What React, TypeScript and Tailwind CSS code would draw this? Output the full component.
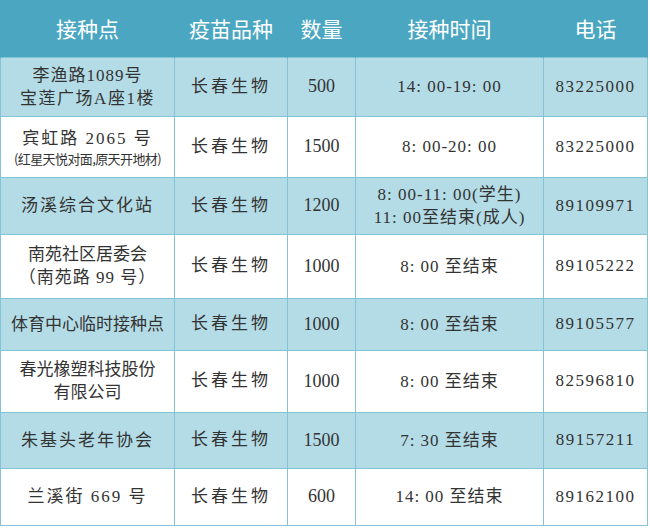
const rows: {
    place: React.ReactNode;
    qty: string;
    time: React.ReactNode;
    phone: string;
    h: string;
    light: boolean;
}[] = [
    {
        place: (
            <>
                <div className="tracking-[1px]">李渔路1089号</div>
                <div className="tracking-[1.5px]">宝莲广场A座1楼</div>
            </>
        ),
        qty: "500",
        time: "14: 00-19: 00",
        phone: "83225000",
        h: "h-[59px]",
        light: true,
    },
    {
        place: (
            <>
                <div className="tracking-[2px]">宾虹路 2065 号</div>
                <div className="text-[13px] leading-[17px] tracking-[-0.6px] font-['Noto_Sans_CJK_SC',sans-serif]">
                    (红星天悦对面,原天开地材)
                </div>
            </>
        ),
        qty: "1500",
        time: "8: 00-20: 00",
        phone: "83225000",
        h: "h-[61px]",
        light: false,
    },
    {
        place: <div className="tracking-[2px]">汤溪综合文化站</div>,
        qty: "1200",
        time: (
            <>
                <div>8: 00-11: 00(学生)</div>
                <div>11: 00至结束(成人)</div>
            </>
        ),
        phone: "89109971",
        h: "h-[57px]",
        light: true,
    },
    {
        place: (
            <>
                <div>南苑社区居委会</div>
                <div className="tracking-[1px]">（南苑路 99 号）</div>
            </>
        ),
        qty: "1000",
        time: "8: 00 至结束",
        phone: "89105222",
        h: "h-[64px]",
        light: false,
    },
    {
        place: <div>体育中心临时接种点</div>,
        qty: "1000",
        time: "8: 00 至结束",
        phone: "89105577",
        h: "h-[52px]",
        light: true,
    },
    {
        place: (
            <>
                <div>春光橡塑科技股份</div>
                <div>有限公司</div>
            </>
        ),
        qty: "1000",
        time: "8: 00 至结束",
        phone: "82596810",
        h: "h-[62px]",
        light: false,
    },
    {
        place: <div className="tracking-[2px]">朱基头老年协会</div>,
        qty: "1500",
        time: "7: 30 至结束",
        phone: "89157211",
        h: "h-[56px]",
        light: true,
    },
    {
        place: <div className="tracking-[2px]">兰溪街 669 号</div>,
        qty: "600",
        time: "14: 00 至结束",
        phone: "89162100",
        h: "h-[57px]",
        light: false,
    },
];

const headers = ["接种点", "疫苗品种", "数量", "接种时间", "电话"];
const widths = ["w-[174px]", "w-[113px]", "w-[68px]", "w-[188px]", "w-[104px]"];

export default function App() {
    return (
        <div className="w-[650px] h-[529px] bg-white overflow-hidden">
            <table className="table-fixed border-collapse w-[647px] text-[#333333] font-['Liberation_Serif','Noto_Sans_CJK_SC',serif]">
                <thead>
                    <tr className="h-[57px] bg-[#4ba7c1]">
                        {headers.map((h, i) => (
                            <th
                                key={h}
                                className={`${widths[i]} text-white font-normal text-[21px] text-center font-['Noto_Sans_CJK_SC',sans-serif] border-x border-[#4ba7c1]`}
                            >
                                {h}
                            </th>
                        ))}
                    </tr>
                </thead>
                <tbody>
                    {rows.map((r, i) => (
                        <tr key={i} className={`${r.h} ${r.light ? "bg-[#b4dce6]" : "bg-white"}`}>
                            <td className="border border-[#82c3d6] text-center text-[17px] leading-[23px] px-1">
                                {r.place}
                            </td>
                            <td className="border border-[#82c3d6] text-center text-[17px] tracking-[3px]">
                                长春生物
                            </td>
                            <td className="border border-[#82c3d6] text-center text-[18px]">{r.qty}</td>
                            <td className="border border-[#82c3d6] text-center text-[17px] leading-[23px] tracking-[1px]">
                                {r.time}
                            </td>
                            <td className="border border-[#82c3d6] text-center text-[17px] tracking-[1.5px]">
                                {r.phone}
                            </td>
                        </tr>
                    ))}
                </tbody>
            </table>
        </div>
    );
}
